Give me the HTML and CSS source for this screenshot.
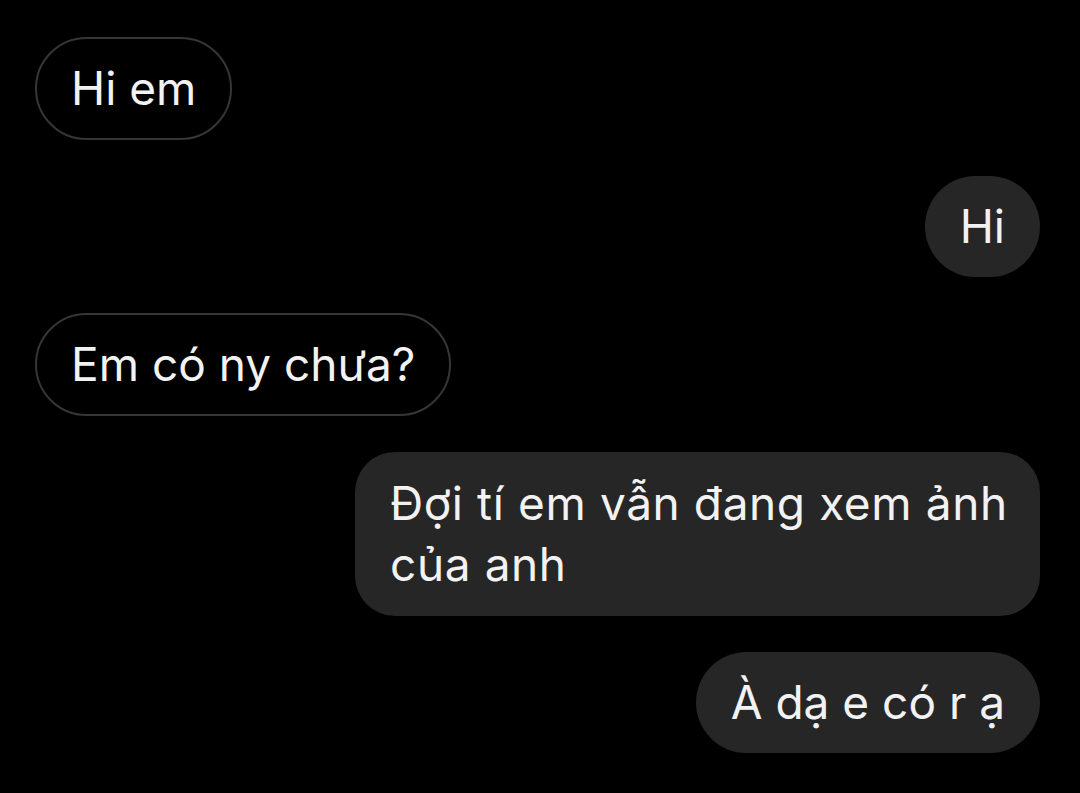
FILE: index.html
```html
<!DOCTYPE html>
<html lang="vi">

<head>
   <meta charset="utf-8" />
   <title>Tin nhắn</title>
   <meta name="viewport" content="width=device-width, initial-scale=1">
   <link rel="stylesheet" href="styles.css">
</head>

<body>
   <div class="thread">
      <div class="msg msg-in">Hi em</div>
      <div class="msg msg-out">Hi</div>
      <div class="msg msg-in">Em có ny chưa?</div>
      <div class="msg msg-out msg-long">Đợi tí em vẫn đang xem ảnh của anh</div>
      <div class="msg msg-out">À dạ e có r ạ</div>
   </div>
</body>

</html>
```

FILE: styles.css
```css
html {
   margin: 0;
   padding: 0;
}

* {
   box-sizing: border-box
}

body {
   margin: 0;
   background: #000;
   color: #f2f2f2;
   font-family: "Inter", "Roboto", sans-serif;
}

.thread {
   display: flex;
   flex-direction: column;
   gap: 36px;
   padding: 37px 40px 0 35px;
}

.msg {
   font-size: 46px;
   line-height: 61px;
   padding: 20px 35px;
   border-radius: 52px;
   max-width: 685px;
}

.msg-in {
   align-self: flex-start;
   background: #000;
   border: 2px solid #363636;
   padding: 19px 34px;
}

.msg-out {
   align-self: flex-end;
   background: #262626;
}

.msg-long {
   width: 685px;
   border-radius: 40px;
   letter-spacing: 0.6px;
   padding: 21px 20px 21px 35px;
}
```
